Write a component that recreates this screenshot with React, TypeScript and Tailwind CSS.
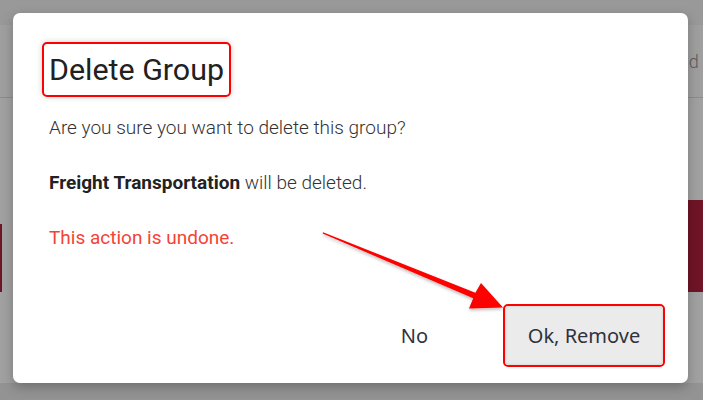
import React from 'react';

function Arrow() {
  return (
    <svg
      className="pointer-events-none absolute left-0 top-0"
      width={703}
      height={400}
      viewBox="0 0 703 400"
    >
      <defs>
        <filter id="arrowShadow" x="-10%" y="-10%" width="120%" height="130%">
          <feDropShadow dx="0" dy="2" stdDeviation="1.5" floodColor="#000" floodOpacity="0.25" />
        </filter>
      </defs>
      <polygon
        points="323,232.2 475.4,292.7 481,283 503,307.5 469,308.6 473.2,298.3 322.6,233.6"
        fill="#ff0000"
        filter="url(#arrowShadow)"
      />
    </svg>
  );
}

export default function App() {
  return (
    <div
      className="relative h-[400px] w-[703px] overflow-hidden bg-[#a1a1a1]"
      style={{ fontFamily: 'Roboto, "Noto Sans", sans-serif' }}
    >
      {/* page behind the overlay */}
      <div className="h-[25px] bg-[#999999]" />
      <div className="flex h-[73px] items-center justify-end border-b border-[#8c8c8c] bg-[#9f9f9f]">
        <span className="mr-[-10px] text-[18px] font-light text-[#5c5c5c]">Add 4</span>
      </div>
      <div className="relative h-[302px]">
        <div className="absolute right-0 top-[102px] h-[92px] w-[40px] bg-[#701427]" />
        <div className="absolute left-0 top-[126px] h-[68px] w-[2px] bg-[#701427]" />
        <div className="absolute bottom-0 left-0 right-0 h-[17px] bg-[#939393]" />
      </div>

      {/* dialog */}
      <div className="absolute left-[13px] top-[13px] flex h-[370px] w-[675px] flex-col rounded-[7px] bg-white shadow-[0_4px_12px_rgba(0,0,0,0.25)]">
        <div className="pl-[29px] pt-[29px]">
          <h2 className="inline-block rounded-[5px] border-2 border-[#ff0000] px-[5px] py-[4px] text-[30.4px] font-normal leading-[43px] text-[#212121] shadow-[0_0_6px_rgba(0,0,0,0.18)]">
            Delete Group
          </h2>
        </div>
        <div className="px-9 pt-[20px] text-[19px] font-light leading-[22px] text-[#333333]">
          <p>Are you sure you want to delete this group?</p>
          <p className="mt-[33px]">
            <span className="font-bold text-[#222222]">Freight Transportation</span> will be deleted.
          </p>
          <p className="mt-[33px] font-normal text-[#f44336]">This action is undone.</p>
        </div>
        <div className="mt-auto flex items-center justify-end gap-[75px] pb-[16px] pr-[23px]">
          <button
            className="text-[20px] text-[#2d3340]"
            style={{ fontFamily: '"Noto Sans", "Open Sans", sans-serif' }}
          >
            No
          </button>
          <div className="rounded-[5px] border-2 border-[#ff0000] p-0">
            <button
              className="h-[59px] w-[158px] rounded-[4px] bg-[#ebebeb] text-[20px] text-[#2d3340] shadow-[inset_0_0_3px_rgba(0,0,0,0.15)]"
              style={{ fontFamily: '"Noto Sans", "Open Sans", sans-serif' }}
            >
              Ok, Remove
            </button>
          </div>
        </div>
      </div>

      <Arrow />
    </div>
  );
}
